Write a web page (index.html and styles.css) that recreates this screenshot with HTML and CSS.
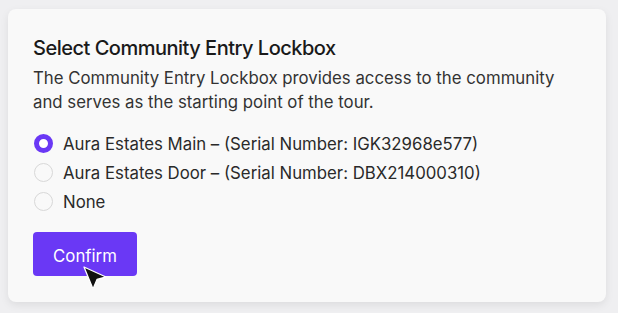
FILE: index.html
```html
<!DOCTYPE html>
<html lang="en">
<head>
<meta charset="utf-8">
<title>Select Community Entry Lockbox</title>
<link rel="stylesheet" href="styles.css">
</head>
<body>
<div class="card">
  <h2 class="title">Select Community Entry Lockbox</h2>
  <p class="desc">The Community Entry Lockbox provides access to the community and serves as the starting point of the tour.</p>
  <div class="options">
    <label class="option"><span class="radio checked"></span><span>Aura Estates Main – (Serial Number: IGK32968e577)</span></label>
    <label class="option"><span class="radio"></span><span>Aura Estates Door – (Serial Number: DBX214000310)</span></label>
    <label class="option"><span class="radio"></span><span>None</span></label>
  </div>
  <div class="actions">
    <button class="btn">Confirm</button>
    <svg class="cursor" width="28" height="28" viewBox="0 0 28 28">
      <path d="M2 2 L24 12 L15 14.5 L11 24 Z" fill="#111" stroke="#fff" stroke-width="1.3" stroke-linejoin="round"/>
    </svg>
  </div>
</div>
</body>
</html>
```
FILE: styles.css
```css
html, body {
  margin: 0;
  padding: 0;
}
body {
  background: #efeff1;
  font-family: Inter, "Noto Sans", sans-serif;
  width: 618px;
  height: 313px;
  overflow: hidden;
}
.card {
  margin: 9px 12px 0 8px;
  height: 293px;
  box-sizing: border-box;
  background: #f9f9f9;
  border-radius: 8px;
  box-shadow: 0 3px 8px rgba(0,0,0,0.08);
  padding: 25px 25px 0 25px;
}
.title {
  margin: 0;
  font-size: 20px;
  line-height: 28px;
  font-weight: 500;
  color: #1a1a1a;
  letter-spacing: -0.5px;
}
.desc {
  margin: 4px 0 0;
  font-size: 16.8px;
  line-height: 24px;
  color: #333;
  width: 540px;
}
.options {
  margin-top: 15px;
  display: flex;
  flex-direction: column;
}
.option {
  display: flex;
  align-items: center;
  gap: 10px;
  height: 29px;
  font-size: 16.8px;
  color: #2a2a2a;
}
.radio {
  width: 19px;
  height: 19px;
  box-sizing: border-box;
  border-radius: 50%;
  border: 1px solid #d8d8d8;
  background: #f9f9f9;
  margin-left: 1px;
}
.radio.checked {
  border: 5px solid #6a38f5;
  background: #fff;
}
.actions {
  position: relative;
  margin-top: 16px;
}
.btn {
  width: 104px;
  height: 44px;
  border: none;
  border-radius: 4px;
  background: #6a38f5;
  color: #fff;
  font-family: Inter, "Noto Sans", sans-serif;
  font-size: 16.8px;
  padding: 3px 0 0;
}
.cursor {
  position: absolute;
  left: 49px;
  top: 33px;
}
```
